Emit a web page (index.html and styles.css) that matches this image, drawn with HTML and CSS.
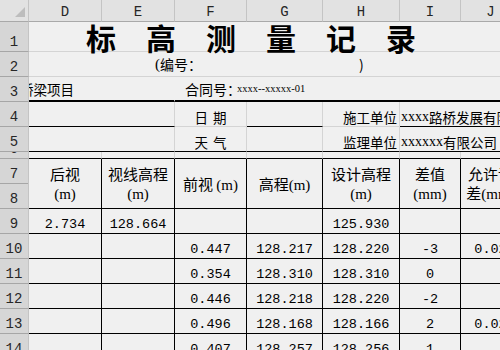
FILE: index.html
```html
<!DOCTYPE html>
<html lang="zh-CN">
<head>
<meta charset="utf-8">
<title>标高测量记录</title>
<link rel="stylesheet" href="styles.css">
</head>
<body>
<div class="sheet">
  <!-- column headers -->
  <div class="corner"><svg class="tri" width="10" height="10" viewBox="0 0 10 10"><polygon points="10,0 10,10 0,10"/></svg></div>
  <div class="ch">D</div>
  <div class="ch">E</div>
  <div class="ch">F</div>
  <div class="ch">G</div>
  <div class="ch">H</div>
  <div class="ch">I</div>
  <div class="ch">J</div>

  <!-- row 1 -->
  <div class="rh">1</div>
  <div class="c s7 title"><span>标</span><span>高</span><span>测</span><span>量</span><span>记</span><span>录</span></div>

  <!-- row 2 -->
  <div class="rh">2</div>
  <div class="c s7 mid no"><span class="lat">(</span>编号：<span class="close">)</span></div>

  <!-- row 3 -->
  <div class="rh">3</div>
  <div class="c s2 mid thick proj"><span class="shift">桥梁项目</span></div>
  <div class="c s5 mid thick contract">合同号：<span class="lat small">xxxx--xxxxx-01</span></div>

  <!-- row 4 -->
  <div class="rh">4</div>
  <div class="c s2 bb"></div>
  <div class="c bot center">日<span class="sp"></span>期</div>
  <div class="c bb"></div>
  <div class="c bot right">施工单位</div>
  <div class="c s2 bb bot left"><span class="lat">xxxx</span>路桥发展有限公司</div>

  <!-- row 5 -->
  <div class="rh">5</div>
  <div class="c s2 bb"></div>
  <div class="c bb bot center">天<span class="sp"></span>气</div>
  <div class="c bb"></div>
  <div class="c bb bot right">监理单位</div>
  <div class="c s2 bb bot left"><span class="lat">xxxxxx</span>有限公司</div>

  <!-- row 6 -->
  <div class="rh">6</div>
  <div class="c bb"></div><div class="c bb"></div><div class="c bb"></div><div class="c bb"></div>
  <div class="c bb"></div><div class="c bb"></div><div class="c bb"></div>

  <!-- rows 7-8 (merged header) -->
  <div class="rh pair"><div class="sub">7</div><div class="sub">8</div></div>
  <div class="c t th"><div class="in">后视<br><span class="lat">(m)</span></div></div>
  <div class="c t th"><div class="in">视线高程<br><span class="lat">(m)</span></div></div>
  <div class="c t th"><div class="in">前视 <span class="lat">(m)</span></div></div>
  <div class="c t th"><div class="in">高程<span class="lat">(m)</span></div></div>
  <div class="c t th"><div class="in">设计高程<br><span class="lat">(m)</span></div></div>
  <div class="c t th"><div class="in">差值<br><span class="lat">(mm)</span></div></div>
  <div class="c t th"><div class="in">允许误差<span class="lat">(mm)</span></div></div>

  <!-- row 9 -->
  <div class="rh">9</div>
  <div class="c t num">2.734</div>
  <div class="c t num">128.664</div>
  <div class="c t num"></div>
  <div class="c t num"></div>
  <div class="c t num">125.930</div>
  <div class="c t num"></div>
  <div class="c t num"></div>

  <!-- row 10 -->
  <div class="rh">10</div>
  <div class="c t num"></div>
  <div class="c t num"></div>
  <div class="c t num">0.447</div>
  <div class="c t num">128.217</div>
  <div class="c t num">128.220</div>
  <div class="c t num">-3</div>
  <div class="c t num">0.02</div>

  <!-- row 11 -->
  <div class="rh">11</div>
  <div class="c t num"></div>
  <div class="c t num"></div>
  <div class="c t num">0.354</div>
  <div class="c t num">128.310</div>
  <div class="c t num">128.310</div>
  <div class="c t num">0</div>
  <div class="c t num"></div>

  <!-- row 12 -->
  <div class="rh">12</div>
  <div class="c t num"></div>
  <div class="c t num"></div>
  <div class="c t num">0.446</div>
  <div class="c t num">128.218</div>
  <div class="c t num">128.220</div>
  <div class="c t num">-2</div>
  <div class="c t num"></div>

  <!-- row 13 -->
  <div class="rh">13</div>
  <div class="c t num"></div>
  <div class="c t num"></div>
  <div class="c t num">0.496</div>
  <div class="c t num">128.168</div>
  <div class="c t num">128.166</div>
  <div class="c t num">2</div>
  <div class="c t num">0.02</div>

  <!-- row 14 -->
  <div class="rh">14</div>
  <div class="c t num"></div>
  <div class="c t num"></div>
  <div class="c t num">0.407</div>
  <div class="c t num">128.257</div>
  <div class="c t num">128.256</div>
  <div class="c t num">1</div>
  <div class="c t num"></div>
</div>
</body>
</html>
```

FILE: styles.css
```css
html, body {
  margin: 0;
  padding: 0;
}
body {
  width: 500px;
  height: 350px;
  overflow: hidden;
  background: #f0f0f0;
  font-family: "Noto Sans CJK SC", sans-serif;
  color: #000;
}

.sheet {
  display: grid;
  grid-template-columns: 29px 73px 73px 72px 76px 77px 61px 60px;
  grid-template-rows: 22px 30px 25px 25px 25px 25px 7px 50px repeat(6, 25px);
  width: 521px;
}

/* ---------- headers ---------- */
.corner {
  box-sizing: border-box;
  background: #e2e2e2;
  border-right: 1px solid #c4c4c4;
  border-bottom: 1px solid #a9a9a9;
  display: flex;
  justify-content: flex-end;
  align-items: flex-end;
  padding: 0 3px 4px 0;
}
.tri polygon { fill: #bdbdbd; }

.ch {
  box-sizing: border-box;
  background: #e2e2e2;
  border-right: 1px solid #c4c4c4;
  border-bottom: 1px solid #a9a9a9;
  font-family: "Liberation Mono", monospace;
  font-size: 14px;
  line-height: 14px;
  color: #262626;
  display: flex;
  justify-content: center;
  align-items: center;
  padding-top: 3px;
}

.rh {
  box-sizing: border-box;
  background: #d6d6d6;
  border-right: 1px solid #c4c4c4;
  border-bottom: 1px solid #a6a6a6;
  font-family: "Liberation Mono", monospace;
  font-size: 14px;
  line-height: 14px;
  color: #262626;
  display: flex;
  justify-content: center;
  align-items: flex-end;
  padding-bottom: 2px;
  overflow: hidden;
}
.rh.pair {
  flex-direction: column;
  align-items: stretch;
  padding-bottom: 0;
}
.rh .sub {
  flex: 1;
  display: flex;
  justify-content: center;
  align-items: flex-end;
  padding-bottom: 2px;
}
.rh .sub:first-child { border-bottom: 1px solid #a6a6a6; }

/* ---------- cells ---------- */
.c {
  box-sizing: border-box;
  border-right: 1px solid #d4d4d4;
  border-bottom: 1px solid #d4d4d4;
  font-size: 13.5px;
  line-height: 14px;
  display: flex;
  white-space: nowrap;
  min-width: 0;
}
.s2 { grid-column: span 2; }
.s5 { grid-column: span 5; }
.s7 { grid-column: span 7; }

.bb { border-bottom-color: #000; }
.t { border-right-color: #000; border-bottom-color: #000; }
.thick { border-bottom: 2px solid #000; }
.no { border-right-color: transparent; }

.mid { align-items: center; }
.bot { align-items: flex-end; padding-bottom: 2px; }
.center { justify-content: center; }
.right { justify-content: flex-end; padding-right: 2px; }
.left { justify-content: flex-start; padding-left: 1px; }
.sp { display: inline-block; width: 5px; }

.lat { font-family: "Liberation Serif", serif; font-size: 14px; }
.small { font-size: 10.5px; }

/* row 1 title */
.title {
  border-right-color: transparent;
  font-weight: 700;
  font-size: 30px;
  line-height: 30px;
  gap: 30px;
  padding-left: 57px;
  align-items: flex-start;
  overflow: visible;
}

/* row 2 */
.no { padding-left: 126px; font-size: 14px; }
.no .lat { font-size: 15px; }
.close { margin-left: 157px; }

/* row 3 */
.proj {
  overflow: hidden;
  border-right-color: transparent;
  font-size: 13.5px;
}
.shift { margin-left: -9px; }
.contract {
  font-size: 14px;
  padding-left: 10px;
  border-right-color: transparent;
}
.contract .lat { margin-left: -4px; }

/* table header */
.th {
  font-size: 15px;
  justify-content: center;
  align-items: center;
  white-space: normal;
  padding-top: 1px;
}
.th .lat { font-size: 15px; }
.th .in {
  text-align: center;
  line-height: 19px;
  max-width: 100%;
}

/* data */
.num {
  font-family: "Liberation Mono", monospace;
  font-size: 13.5px;
  line-height: 14px;
  justify-content: center;
  align-items: flex-end;
  padding-bottom: 1px;
}
```
